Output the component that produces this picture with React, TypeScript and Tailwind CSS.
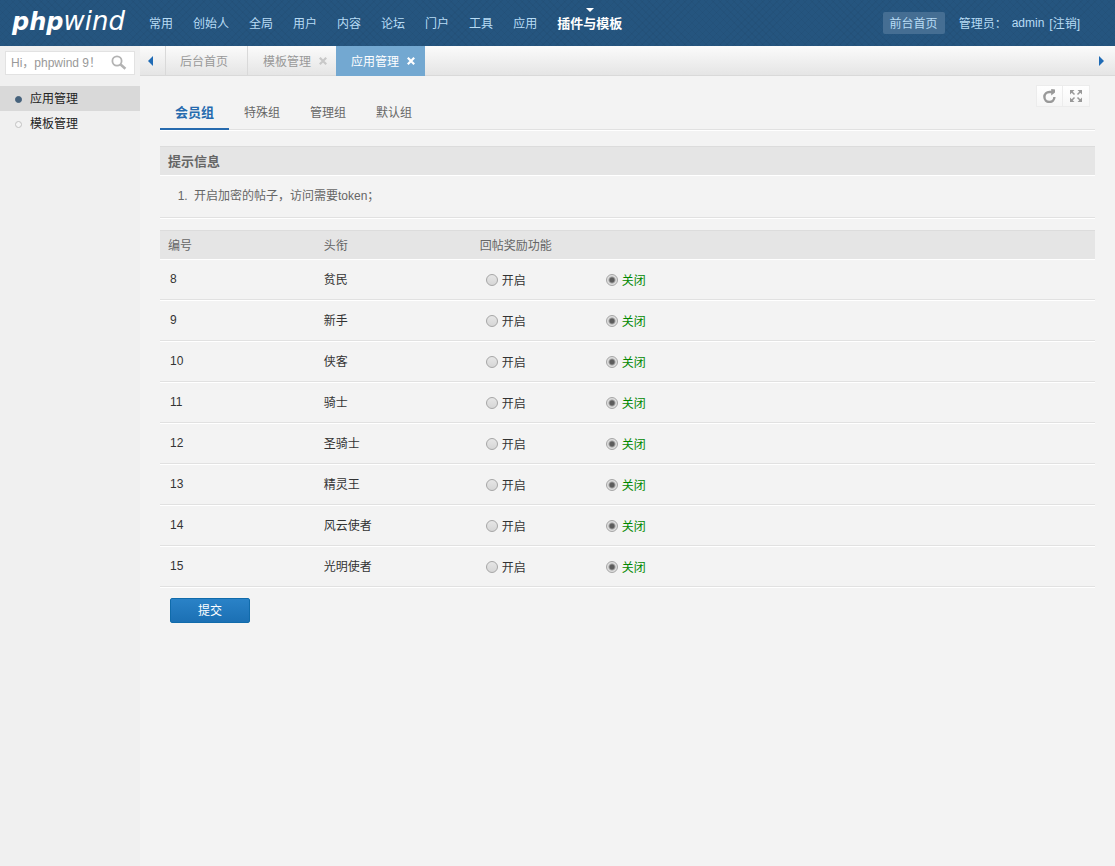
const navItems = ['常用', '创始人', '全局', '用户', '内容', '论坛', '门户', '工具', '应用', '插件与模板'];
const activeNav = '插件与模板';

const menuItems = ['应用管理', '模板管理'];
const groupTabs = ['会员组', '特殊组', '管理组', '默认组'];

const levels = [
    { id: 8, title: '贫民' },
    { id: 9, title: '新手' },
    { id: 10, title: '侠客' },
    { id: 11, title: '骑士' },
    { id: 12, title: '圣骑士' },
    { id: 13, title: '精灵王' },
    { id: 14, title: '风云使者' },
    { id: 15, title: '光明使者' },
];

const radioClass =
    'w-3 h-3 mr-1 shrink-0 appearance-none rounded-full border border-[#a6a6a6] bg-linear-to-b from-[#e6e6e6] to-[#d6d6d6] checked:bg-[radial-gradient(circle,#5c5c5c_0,#5c5c5c_2px,#dedede_4px)]';

// grey line with a white highlight under it
const rowLine = 'border-b border-white shadow-[inset_0_-1px_0_#e1e1e1]';

const headLine = 'border-t border-b border-t-[#dcdcdc] border-b-white bg-[#e5e5e5] text-[#666]';

function CloseIcon() {
    return (
        <svg width="8" height="8" viewBox="0 0 8 8" stroke="currentColor" strokeWidth="2.2" aria-hidden="true">
            <path d="M0.8 0.8L7.2 7.2M7.2 0.8L0.8 7.2" />
        </svg>
    );
}

function Header() {
    return (
        <header className="flex h-[46px] items-center bg-[#25557f] bg-[repeating-linear-gradient(45deg,#00000008_0_1px,transparent_1px_5px),repeating-linear-gradient(-45deg,#00000008_0_1px,transparent_1px_5px)] pr-[35px] text-[#b8dcf5]">
            <a href="#" className="w-[139px] shrink-0 pl-3 font-['DejaVu_Sans',sans-serif] leading-[42px] italic text-white">
                <span className="text-2xl leading-[42px] font-bold">php</span>
                <span className="text-[26px] leading-[42px]">wind</span>
            </a>
            <nav className="flex grow pt-[2px]">
                {navItems.map((item) =>
                    item === activeNav ? (
                        <a key={item} href="#" className="relative px-[10px] text-[13px] leading-[44px] font-bold text-white">
                            <svg width="8" height="4" viewBox="0 0 8 4" fill="currentColor" className="absolute top-[6px] left-1/2 -translate-x-1/2" aria-hidden="true">
                                <path d="M0 0H8L4 4Z" />
                            </svg>
                            {item}
                        </a>
                    ) : (
                        <a key={item} href="#" className="px-[10px] leading-[44px]">{item}</a>
                    )
                )}
            </nav>
            <a href="#" className="mr-[14px] h-[22px] rounded-xs bg-[#456e93] px-[7px] leading-6">前台首页</a>
            <span className="pt-[2px]">管理员：</span>
            <span className="mx-[5px]">admin</span>
            <a href="#" className="pt-[2px]">[注销]</a>
        </header>
    );
}

function Sidebar() {
    return (
        <aside className="w-[140px] shrink-0 bg-[#f0f0f0] pt-[5px]">
            <form className="mx-[5px] mb-[11px] flex h-6 items-center border border-[#e2e2e2] bg-white">
                <input
                    type="text"
                    aria-label="搜索"
                    placeholder="Hi，phpwind 9！"
                    className="w-0 grow pl-[5px] text-[#333] outline-none placeholder:text-[#999]"
                />
                <button type="submit" aria-label="搜索" className="mr-[7px] text-[#b3b3b3]">
                    <svg width="16" height="16" viewBox="0 0 16 16" fill="none" stroke="currentColor" aria-hidden="true">
                        <circle cx="6" cy="6" r="4.6" strokeWidth="1.8" />
                        <path d="M9.6 9.6L14.4 13.8" strokeWidth="2.6" />
                    </svg>
                </button>
            </form>
            <ul>
                {menuItems.map((item, i) => (
                    <li key={item}>
                        <a href="#" className={`flex items-center pt-px pl-[15px] leading-6 text-[#222] ${i === 0 ? 'bg-[#d9d9d9]' : ''}`}>
                            <span className={`mr-2 size-[7px] rounded-full border ${i === 0 ? 'border-[#46627c] bg-[#46627c]' : 'border-[#c2c2c2] bg-[#f5f5f5]'}`} />
                            {item}
                        </a>
                    </li>
                ))}
            </ul>
        </aside>
    );
}

function TabBar() {
    return (
        <div className="flex h-[30px] bg-linear-to-b from-[#fbfbfb] to-[#e4e4e4] text-[#999]">
            <button type="button" aria-label="上一个" className="flex w-[26px] items-center border-r border-b border-[#d9d9d9] pl-2 text-[#1f6bb5]">
                <svg width="5" height="10" viewBox="0 0 5 10" fill="currentColor" aria-hidden="true">
                    <path d="M5 0V10L0 5Z" />
                </svg>
            </button>
            <a href="#" className="w-[82px] border-r border-b border-[#d9d9d9] pl-[14px] leading-8">后台首页</a>
            <div className="flex w-[88px] items-center border-b border-[#d9d9d9] pl-[15px]">
                <a href="#" className="pt-[2px]">模板管理</a>
                <button type="button" aria-label="关闭模板管理" className="ml-2 text-[#c8c8c8]"><CloseIcon /></button>
            </div>
            <div className="flex w-[89px] items-center bg-[#73a8d1] pl-[15px] text-white">
                <a href="#" className="pt-[2px]">应用管理</a>
                <button type="button" aria-label="关闭应用管理" className="ml-2"><CloseIcon /></button>
            </div>
            <div className="flex grow items-center justify-end border-b border-[#d9d9d9] pr-[11px]">
                <button type="button" aria-label="下一个" className="text-[#1f6bb5]">
                    <svg width="5" height="10" viewBox="0 0 5 10" fill="currentColor" aria-hidden="true">
                        <path d="M0 0V10L5 5Z" />
                    </svg>
                </button>
            </div>
        </div>
    );
}

function PageTools() {
    return (
        <div className="absolute top-[9px] right-[25px] flex h-[22px] border border-[#ececec] bg-linear-to-b from-white to-[#f6f6f6] text-[#999]">
            <button type="button" aria-label="刷新" className="flex w-[26px] items-center justify-center border-r border-[#ececec]">
                <svg width="14" height="14" viewBox="0 0 14 14" fill="none" stroke="currentColor" strokeWidth="2.4" aria-hidden="true">
                    <path d="M11.4 8A5 5 0 1 1 6.4 3H9" />
                    <path d="M8.2 0L12 0.6V3.4L8.2 6.4Z" fill="currentColor" stroke="none" />
                </svg>
            </button>
            <button type="button" aria-label="全屏" className="flex w-[26px] items-center justify-center">
                <svg width="12" height="12" viewBox="0 0 12 12" fill="currentColor" stroke="currentColor" aria-hidden="true">
                    <path stroke="none" d="M0 0H4.5L0 4.5ZM12 0V4.5L7.5 0ZM0 12V7.5L4.5 12ZM12 12H7.5L12 7.5Z" />
                    <path strokeWidth="1.5" d="M1 1L4.5 4.5M11 1L7.5 4.5M1 11L4.5 7.5M11 11L7.5 7.5" />
                </svg>
            </button>
        </div>
    );
}

function LevelTable() {
    return (
        <table className="w-full table-fixed border-separate border-spacing-0 text-left">
            <thead>
                <tr className="h-[30px]">
                    <th className={`w-1/6 p-0 pt-[2px] pl-2 font-normal ${headLine}`}>编号</th>
                    <th className={`w-1/6 p-0 pt-[2px] pl-2 font-normal ${headLine}`}>头衔</th>
                    <th className={`p-0 pt-[2px] pl-2 font-normal ${headLine}`}>回帖奖励功能</th>
                </tr>
            </thead>
            <tbody className="text-[#333]">
                {levels.map((level) => (
                    <tr key={level.id} className="h-[41px]">
                        <td className={`p-0 pb-[2px] pl-[10px] ${rowLine}`}>{level.id}</td>
                        <td className={`p-0 pl-2 ${rowLine}`}>{level.title}</td>
                        <td className={`p-0 pl-[14px] ${rowLine}`}>
                            <div className="flex">
                                <label className="flex w-[120px] items-center">
                                    <input type="radio" name={`reward-${level.id}`} className={radioClass} />
                                    <span className="pt-px">开启</span>
                                </label>
                                <label className="flex w-[120px] items-center text-[#008800]">
                                    <input type="radio" name={`reward-${level.id}`} defaultChecked className={radioClass} />
                                    <span className="pt-px">关闭</span>
                                </label>
                            </div>
                        </td>
                    </tr>
                ))}
            </tbody>
        </table>
    );
}

export default function App() {
    return (
        <div className="flex min-h-screen flex-col bg-[#f3f3f3] font-['Liberation_Sans','Noto_Sans_CJK_SC',sans-serif] text-xs text-[#333]">
            <Header />
            <div className="flex grow">
                <Sidebar />
                <div className="flex min-w-0 grow flex-col">
                    <TabBar />
                    <main className="relative px-5 pt-5">
                        <PageTools />
                        <nav className={`mb-[15px] flex h-[35px] ${rowLine}`}>
                            {groupTabs.map((tab, i) => (
                                <a
                                    key={tab}
                                    href="#"
                                    className={`px-[15px] leading-[34px] ${i === 0 ? 'border-b-2 border-[#266aae] text-[13px] font-bold text-[#266aae]' : 'text-[#666]'}`}
                                >
                                    {tab}
                                </a>
                            ))}
                        </nav>
                        <section className={`mb-[11px] text-[#666] ${rowLine}`}>
                            <h2 className={`h-[30px] pl-2 text-[13px] leading-[30px] font-bold ${headLine}`}>提示信息</h2>
                            <ol className="list-decimal pt-[9px] pb-[11px] pl-[31px] leading-[22px]">
                                <li className="pl-[3px]">开启加密的帖子，访问需要token；</li>
                            </ol>
                        </section>
                        <form>
                            <LevelTable />
                            <button type="submit" className="mt-[10px] ml-[10px] h-[25px] w-20 rounded-xs border border-[#106bab] bg-linear-to-b from-[#2a82c7] to-[#1b70b4] pt-px text-white">提交</button>
                        </form>
                    </main>
                </div>
            </div>
        </div>
    );
}
